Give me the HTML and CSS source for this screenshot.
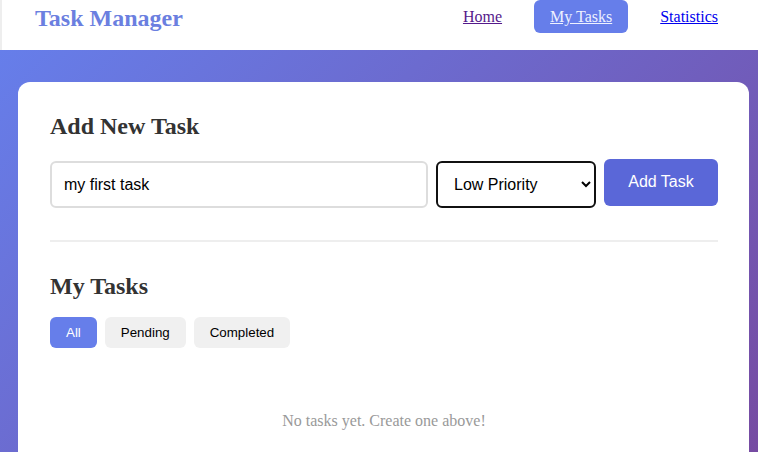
FILE: index.html
```html
<!DOCTYPE html>
<html>
<head>
<meta charset="utf-8">
<link rel="stylesheet" href="styles.css">
</head>
<body>
<header class="topbar">
  <h1 class="logo">Task Manager</h1>
  <nav class="nav">
    <a href="#" class="nav-link visited">Home</a>
    <a href="#" class="nav-link active">My Tasks</a>
    <a href="#" class="nav-link">Statistics</a>
  </nav>
</header>
<main class="stage">
  <section class="card">
    <h2 class="section-title">Add New Task</h2>
    <div class="add-row">
      <input class="task-input" type="text" value="my first task">
      <select class="priority">
        <option>Low Priority</option>
        <option>Medium Priority</option>
        <option>High Priority</option>
      </select>
      <button class="add-btn">Add Task</button>
    </div>
    <hr class="divider">
    <h2 class="section-title">My Tasks</h2>
    <div class="filters">
      <button class="filter active">All</button>
      <button class="filter">Pending</button>
      <button class="filter">Completed</button>
    </div>
    <p class="empty">No tasks yet. Create one above!</p>
  </section>
</main>
</body>
</html>
```

FILE: styles.css
```css
* { box-sizing: border-box; }
html, body { margin: 0; padding: 0; height: 100%; overflow: hidden; }
body {
  font-family: "Liberation Serif", "Times New Roman", serif;
  font-size: 16px;
  background: #fff;
}
.topbar {
  height: 50px;
  display: flex;
  align-items: flex-start;
  justify-content: space-between;
  padding: 0 24px 0 33px;
  border-left: 2px solid #eeeeee;
  background: #fff;
}
.logo {
  margin: 4px 0 0;
  font-size: 24px;
  font-weight: bold;
  color: #6b7fe0;
  line-height: 28px;
}
.nav {
  display: flex;
  align-items: flex-start;
  gap: 16px;
}
.nav-link {
  display: block;
  padding: 8px 16px 7px;
  line-height: 18px;
  font-size: 16px;
  color: #0000ee;
  border-radius: 6px;
}
.nav-link.visited { color: #551a8b; }
.nav-link.active {
  background: #667eea;
  color: #eef2ff;
}
.stage {
  height: calc(100% - 50px);
  background: linear-gradient(135deg, #667eea 0%, #764ba2 100%);
  padding: 32px 9px 0 18px;
}
.card {
  background: #fff;
  border-radius: 12px;
  padding: 30px 31px 40px 32px;
  min-height: 420px;
}
.section-title {
  margin: 0;
  font-size: 24px;
  font-weight: bold;
  color: #333;
  line-height: 28px;
}
.add-row {
  display: flex;
  align-items: flex-start;
  gap: 8px;
  margin-top: 19px;
}
.task-input {
  flex: 1;
  height: 47px;
  margin-top: 2px;
  border: 2px solid #dddddd;
  border-radius: 6px;
  padding: 0 12px;
  font-family: "Liberation Sans", Arial, sans-serif;
  font-size: 16px;
  color: #000;
  outline: none;
}
.priority {
  width: 160px;
  height: 47px;
  margin-top: 2px;
  border: 2px solid #111;
  border-radius: 6px;
  padding: 0 12px;
  font-family: "Liberation Sans", Arial, sans-serif;
  font-size: 16px;
  color: #000;
  background: #fff;
}
.add-btn {
  width: 114px;
  height: 47px;
  border: none;
  border-radius: 6px;
  background: #5a67d8;
  color: #fff;
  font-family: "Liberation Sans", Arial, sans-serif;
  font-size: 16px;
  padding: 0 0 2px;
}
.divider {
  border: none;
  border-top: 2px solid #eeeeee;
  margin: 32px 0 30px;
}
.filters {
  display: flex;
  gap: 8px;
  margin-top: 17px;
}
.filter {
  height: 31px;
  border: none;
  border-radius: 6px;
  padding: 0 16px;
  background: #f0f0f0;
  color: #000;
  font-family: "Liberation Sans", Arial, sans-serif;
  font-size: 13.333px;
}
.filter.active {
  background: #667eea;
  color: #fff;
}
.empty {
  margin: 64px 0 0;
  text-align: center;
  color: #999;
  font-size: 16px;
}
```
